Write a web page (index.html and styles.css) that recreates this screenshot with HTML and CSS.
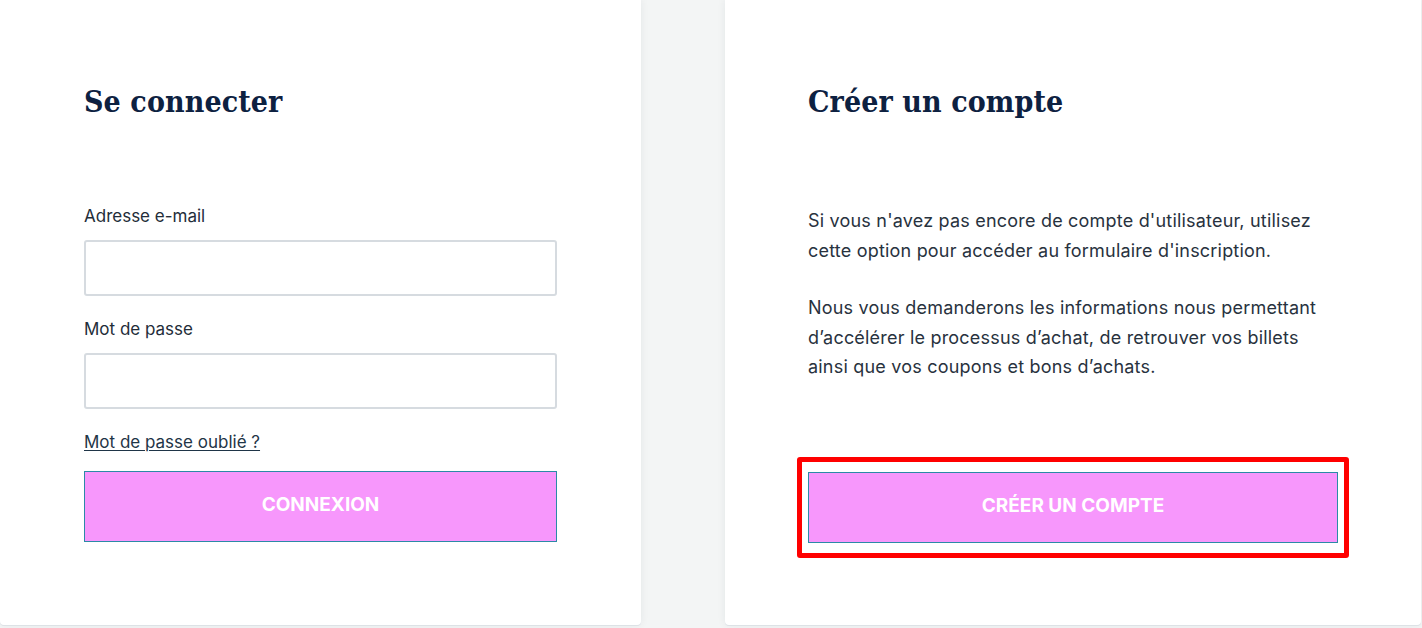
FILE: index.html
```html
<!DOCTYPE html>
<html lang="fr">
<head>
<meta charset="utf-8">
<title>Compte</title>
<link rel="stylesheet" href="styles.css">
</head>
<body>
<main class="page">
  <section class="card card-login">
    <h1 class="title">Se connecter</h1>
    <form class="form">
      <label class="label" for="email">Adresse e-mail</label>
      <input class="input" id="email" type="email">
      <label class="label label-2" for="pwd">Mot de passe</label>
      <input class="input" id="pwd" type="password">
      <a class="forgot" href="#">Mot de passe oublié ?</a>
      <button class="btn" type="button">CONNEXION</button>
    </form>
  </section>
  <section class="card card-register">
    <h1 class="title">Créer un compte</h1>
    <div class="text">
      <p>Si vous n'avez pas encore de compte d'utilisateur, utilisez cette option pour accéder au formulaire d'inscription.</p>
      <p>Nous vous demanderons les informations nous permettant d’accélérer le processus d’achat, de retrouver vos billets ainsi que vos coupons et bons d’achats.</p>
    </div>
    <div class="btn-wrap">
      <button class="btn" type="button">CRÉER UN COMPTE</button>
      <span class="highlight"></span>
    </div>
  </section>
</main>
</body>
</html>
```

FILE: styles.css
```css
html, body {
  margin: 0;
  padding: 0;
}
body {
  background: #f3f5f5;
  font-family: "Inter", "Liberation Sans", sans-serif;
  color: #28323e;
  width: 1422px;
  height: 628px;
  overflow: hidden;
}
.page {
  display: grid;
  grid-template-columns: 641px 696px;
  column-gap: 84px;
  height: 625px;
}
.card {
  background: #ffffff;
  border-radius: 0 0 4px 4px;
  box-shadow: 0 1px 0 #dde2e6, 0 0 8px rgba(20, 40, 60, 0.07);
  padding: 78px 84px 0 84px;
  display: flex;
  flex-direction: column;
}
.card-register {
  padding-left: 83px;
  padding-right: 83px;
}
.title {
  margin: 0;
  font-family: "DejaVu Serif Condensed", "DejaVu Serif", serif;
  font-stretch: condensed;
  font-weight: bold;
  font-size: 30px;
  line-height: 36px;
  padding-top: 6px;
  color: #0d2141;
  letter-spacing: 0.1px;
}
.form {
  display: flex;
  flex-direction: column;
  margin-top: 86px;
}
.label {
  font-size: 17px;
  line-height: 20px;
  color: #232d39;
}
.label-2 {
  margin-top: 23px;
}
.input {
  margin-top: 14px;
  height: 56px;
  box-sizing: border-box;
  border: 2px solid #d6dbe0;
  border-radius: 3px;
  background: #fff;
  outline: none;
}
.forgot {
  margin-top: 23px;
  align-self: flex-start;
  font-size: 17px;
  line-height: 20px;
  color: #1f3547;
  text-decoration: underline;
  text-underline-offset: 2px;
}
.btn {
  display: block;
  width: 100%;
  height: 71px;
  margin-top: 19px;
  padding: 0 0 4px 0;
  background: #f797fc;
  border: 1px solid #2c8aa6;
  color: #ffffff;
  font-family: "Inter", "Liberation Sans", sans-serif;
  font-weight: 700;
  font-size: 19px;
  letter-spacing: 0;
  cursor: pointer;
}
.text {
  margin-top: 86px;
  font-size: 18px;
  line-height: 29.5px;
  letter-spacing: 0.2px;
  color: #28323e;
}
.text p {
  margin: 0 0 28px 0;
}
.btn-wrap {
  position: relative;
  margin-top: 62px;
}
.btn-wrap .btn {
  margin-top: 0;
}
.highlight {
  position: absolute;
  left: -11px;
  right: -11px;
  top: -15px;
  bottom: -15px;
  border: 5px solid #ff0000;
  border-radius: 3px;
  pointer-events: none;
}
```
